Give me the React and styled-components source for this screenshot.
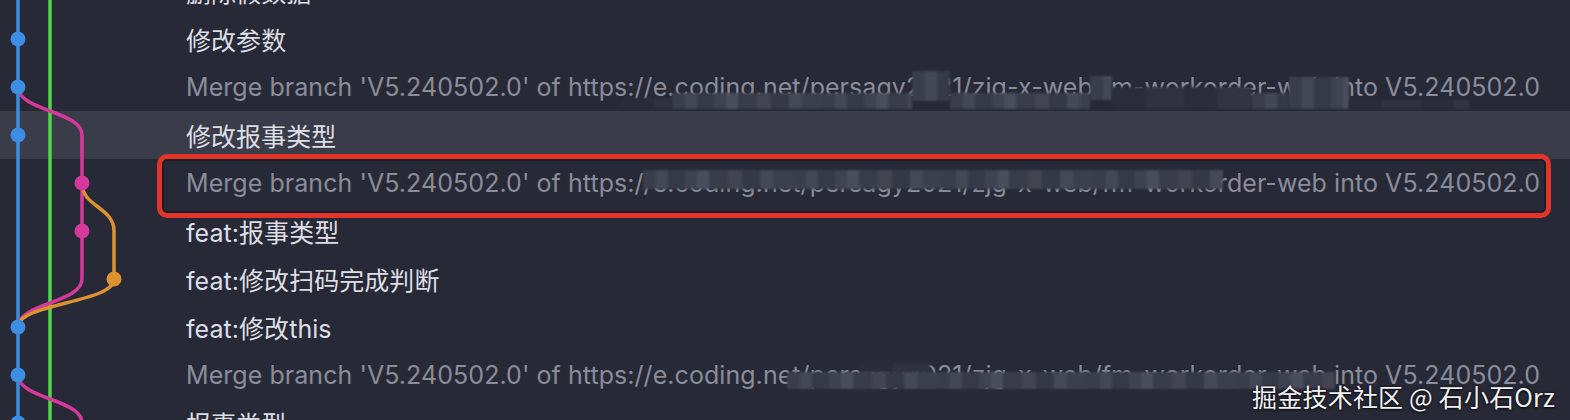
import React from 'react';
import styled, { createGlobalStyle } from 'styled-components';

const ROW_H = 48;
const LIST_TOP = -33;
const LANE_X0 = 18;
const LANE_GAP = 32;

const COLORS = {
  blue: '#3b8ee2',
  green: '#52d64a',
  pink: '#d5399b',
  orange: '#dc922e',
};

const laneX = (l) => LANE_X0 + LANE_GAP * l;
const rowY = (k) => LIST_TOP + ROW_H * k + ROW_H / 2;

const MERGE =
  "Merge branch 'V5.240502.0' of https://e.coding.net/persagy2021/zjg-x-web/fm-workorder-web into V5.240502.0";

const commits = [
  { msg: '删除假数据', lane: 0, color: 'blue' },
  { msg: '修改参数', lane: 0, color: 'blue' },
  {
    msg: MERGE,
    lane: 0,
    color: 'blue',
    dim: true,
    mosaic: [
      { x: 622, y: 35, w: 50, h: 11, tone: 'dark' },
      { x: 672, y: 30, w: 240, h: 16 },
      { x: 912, y: 8, w: 38, h: 30 },
      { x: 950, y: 30, w: 140, h: 16 },
      { x: 1090, y: 13, w: 22, h: 24 },
      { x: 1112, y: 24, w: 140, h: 22, tone: 'dark' },
      { x: 1252, y: 30, w: 37, h: 16 },
      { x: 1289, y: 14, w: 60, h: 32 },
      { x: 1349, y: 37, w: 120, h: 9, tone: 'dark' },
    ],
  },
  { msg: '修改报事类型', lane: 0, color: 'blue', selected: true },
  {
    msg: MERGE,
    lane: 2,
    color: 'pink',
    dim: true,
    annotated: true,
    mosaic: [{ x: 643, y: 11, w: 580, h: 19 }],
  },
  { msg: 'feat:报事类型', lane: 2, color: 'pink' },
  { msg: 'feat:修改扫码完成判断', lane: 3, color: 'orange' },
  { msg: 'feat:修改this', lane: 0, color: 'blue' },
  {
    msg: MERGE,
    lane: 0,
    color: 'blue',
    dim: true,
    mosaic: [
      { x: 860, y: 11, w: 70, h: 11, tone: 'dark' },
      { x: 787, y: 21, w: 548, h: 17 },
    ],
  },
  { msg: '报事类型', lane: 0, color: 'blue' },
];

const curve = (x1, y1, x2, y2) => {
  const my = (y1 + y2) / 2;
  return `M${x1} ${y1} C${x1} ${my} ${x2} ${my} ${x2} ${y2}`;
};

const edges = [
  { color: 'pink', d: `${curve(laneX(0), rowY(2), laneX(2), rowY(3))} L${laneX(2)} ${rowY(6)} ${curve(laneX(2), rowY(6), laneX(0), rowY(7))}` },
  { color: 'orange', d: `${curve(laneX(2), rowY(4), laneX(3), rowY(5))} L${laneX(3)} ${rowY(6)} ${curve(laneX(3), rowY(6), laneX(0), rowY(7))}` },
  { color: 'pink', d: `${curve(laneX(0), rowY(8), laneX(2), rowY(9))} L${laneX(2)} 460` },
];

const GlobalStyle = createGlobalStyle`
  html, body {
    margin: 0;
    padding: 0;
    background: #272936;
  }
  body {
    font-family: Inter, "Noto Sans CJK SC", sans-serif;
    -webkit-font-smoothing: antialiased;
  }
`;

const Viewport = styled.div`
  position: relative;
  width: 1570px;
  height: 420px;
  overflow: hidden;
  background: #272936;
`;

const List = styled.div`
  display: flex;
  flex-direction: column;
  margin-top: ${LIST_TOP}px;
`;

const Row = styled.div`
  position: relative;
  height: ${ROW_H}px;
  flex: none;
  display: flex;
  align-items: center;
  padding-left: 186px;
  background: ${(p) => (p.$selected ? '#3a3c49' : 'transparent')};
  color: ${(p) => (p.$dim ? '#8a8c9a' : '#dddee5')};
  font-size: 25px;
  letter-spacing: 0.055px;
  white-space: nowrap;

  ${(p) =>
    p.$annotated &&
    `
    &::after {
      content: '';
      position: absolute;
      left: 157px;
      right: 19px;
      top: -5px;
      bottom: -11px;
      border: 5px solid #e2352a;
      border-radius: 10px;
      box-shadow: inset 0 0 0 2px rgba(15, 16, 24, 0.45);
      z-index: 3;
      pointer-events: none;
    }
  `}
`;

const Message = styled.span`
  display: block;
`;

const Mosaic = styled.span`
  position: absolute;
  left: ${(p) => p.$x}px;
  top: ${(p) => p.$y}px;
  width: ${(p) => p.$w}px;
  height: ${(p) => p.$h}px;
  z-index: 2;
  filter: blur(1.2px);
  background-color: ${(p) => (p.$tone === 'dark' ? '#2c2e3b' : '#3b3e4c')};
  background-image: ${(p) =>
    p.$tone === 'dark'
      ? 'linear-gradient(90deg, #2a2c39 0 22%, #30323f 22% 48%, #2b2d3a 48% 70%, #323442 70% 100%)'
      : 'linear-gradient(90deg, #3a3d4b 0 9%, #444756 9% 17%, #363947 17% 28%, #3f4250 28% 36%, #4a4d5b 36% 44%, #393c4a 44% 57%, #42454f 57% 66%, #353846 66% 78%, #454857 78% 87%, #3c3f4d 87% 100%)'};
  background-size: 150px 100%;
`;

const GraphLayer = styled.svg`
  position: absolute;
  left: 0;
  top: 0;
  width: 170px;
  height: 420px;
  z-index: 1;
  overflow: visible;
`;

const Watermark = styled.div`
  position: absolute;
  right: 15px;
  bottom: 11px;
  z-index: 4;
  font-family: "Noto Sans CJK SC", Inter, sans-serif;
  font-size: 25px;
  line-height: 1;
  color: #f1f1f3;
  text-shadow: 0 0 3px rgba(0, 0, 0, 0.75), 0 1px 2px rgba(0, 0, 0, 0.6);
  letter-spacing: 0.2px;
`;

function Graph() {
  return (
    <GraphLayer viewBox="0 0 170 420">
      <line x1={laneX(0)} y1={-20} x2={laneX(0)} y2={460} stroke={COLORS.blue} strokeWidth={3.5} />
      <line x1={laneX(1)} y1={-20} x2={laneX(1)} y2={460} stroke={COLORS.green} strokeWidth={3.5} />
      {edges.map((e, i) => (
        <path key={i} d={e.d} fill="none" stroke={COLORS[e.color]} strokeWidth={3.5} strokeLinecap="round" />
      ))}
      {commits.map((c, k) => (
        <circle key={k} cx={laneX(c.lane)} cy={rowY(k)} r={7.5} fill={COLORS[c.color]} />
      ))}
    </GraphLayer>
  );
}

export default function App() {
  return (
    <>
      <GlobalStyle />
      <Viewport>
        <List>
          {commits.map((c, k) => (
            <Row key={k} $dim={c.dim} $selected={c.selected} $annotated={c.annotated}>
              <Message>{c.msg}</Message>
              {c.mosaic &&
                c.mosaic.map((m, i) => (
                  <Mosaic key={i} $x={m.x} $y={m.y} $w={m.w} $h={m.h} $tone={m.tone} />
                ))}
            </Row>
          ))}
        </List>
        <Graph />
        <Watermark>掘金技术社区 @ 石小石Orz</Watermark>
      </Viewport>
    </>
  );
}
